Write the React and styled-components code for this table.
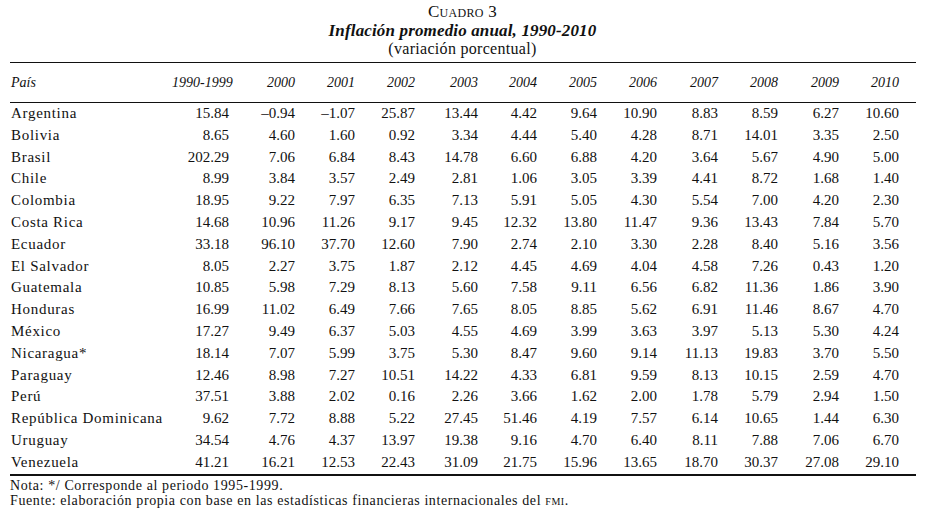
import React from "react";
import styled, { createGlobalStyle } from "styled-components";

const GlobalStyle = createGlobalStyle`
  html, body {
    margin: 0;
    padding: 0;
    background: #ffffff;
  }
  body {
    font-family: "Liberation Serif", "Times New Roman", serif;
    color: #111111;
  }
`;

const years = ["1990-1999", "2000", "2001", "2002", "2003", "2004", "2005", "2006", "2007", "2008", "2009", "2010"];
const colWidths = [74, 66, 60, 60, 63, 59, 60, 60, 61, 60, 61, 60];

const rows = [
  ["Argentina", "15.84", "–0.94", "–1.07", "25.87", "13.44", "4.42", "9.64", "10.90", "8.83", "8.59", "6.27", "10.60"],
  ["Bolivia", "8.65", "4.60", "1.60", "0.92", "3.34", "4.44", "5.40", "4.28", "8.71", "14.01", "3.35", "2.50"],
  ["Brasil", "202.29", "7.06", "6.84", "8.43", "14.78", "6.60", "6.88", "4.20", "3.64", "5.67", "4.90", "5.00"],
  ["Chile", "8.99", "3.84", "3.57", "2.49", "2.81", "1.06", "3.05", "3.39", "4.41", "8.72", "1.68", "1.40"],
  ["Colombia", "18.95", "9.22", "7.97", "6.35", "7.13", "5.91", "5.05", "4.30", "5.54", "7.00", "4.20", "2.30"],
  ["Costa Rica", "14.68", "10.96", "11.26", "9.17", "9.45", "12.32", "13.80", "11.47", "9.36", "13.43", "7.84", "5.70"],
  ["Ecuador", "33.18", "96.10", "37.70", "12.60", "7.90", "2.74", "2.10", "3.30", "2.28", "8.40", "5.16", "3.56"],
  ["El Salvador", "8.05", "2.27", "3.75", "1.87", "2.12", "4.45", "4.69", "4.04", "4.58", "7.26", "0.43", "1.20"],
  ["Guatemala", "10.85", "5.98", "7.29", "8.13", "5.60", "7.58", "9.11", "6.56", "6.82", "11.36", "1.86", "3.90"],
  ["Honduras", "16.99", "11.02", "6.49", "7.66", "7.65", "8.05", "8.85", "5.62", "6.91", "11.46", "8.67", "4.70"],
  ["México", "17.27", "9.49", "6.37", "5.03", "4.55", "4.69", "3.99", "3.63", "3.97", "5.13", "5.30", "4.24"],
  ["Nicaragua*", "18.14", "7.07", "5.99", "3.75", "5.30", "8.47", "9.60", "9.14", "11.13", "19.83", "3.70", "5.50"],
  ["Paraguay", "12.46", "8.98", "7.27", "10.51", "14.22", "4.33", "6.81", "9.59", "8.13", "10.15", "2.59", "4.70"],
  ["Perú", "37.51", "3.88", "2.02", "0.16", "2.26", "3.66", "1.62", "2.00", "1.78", "5.79", "2.94", "1.50"],
  ["República Dominicana", "9.62", "7.72", "8.88", "5.22", "27.45", "51.46", "4.19", "7.57", "6.14", "10.65", "1.44", "6.30"],
  ["Uruguay", "34.54", "4.76", "4.37", "13.97", "19.38", "9.16", "4.70", "6.40", "8.11", "7.88", "7.06", "6.70"],
  ["Venezuela", "41.21", "16.21", "12.53", "22.43", "31.09", "21.75", "15.96", "13.65", "18.70", "30.37", "27.08", "29.10"],
];

const Page = styled.div`
  width: 925px;
  height: 512px;
  padding-top: 2px;
  box-sizing: border-box;
`;

const TitleBlock = styled.header`
  display: flex;
  flex-direction: column;
  align-items: center;
  text-align: center;
`;

const Label = styled.div`
  font-size: 17px;
  line-height: 19px;
  font-variant: small-caps;
  letter-spacing: 0.3px;
`;

const Title = styled.div`
  font-size: 17px;
  line-height: 19px;
  font-style: italic;
  font-weight: bold;
  letter-spacing: 0.15px;
`;

const Subtitle = styled.div`
  font-size: 16px;
  line-height: 18px;
  letter-spacing: 0.3px;
`;

const Table = styled.table`
  margin: 4px 0 0 10px;
  width: 906px;
  border-collapse: collapse;
  table-layout: fixed;
  border-top: 1px solid #111;
  border-bottom: 2px solid #111;
`;

const HeadRow = styled.tr`
  border-bottom: 1px solid #111;
`;

const HeadCell = styled.th`
  height: 39px;
  padding: 0 ${(p) => (p.$first ? "0 0 1px" : "17px 0 0")};
  font-size: 14px;
  font-style: italic;
  font-weight: normal;
  text-align: ${(p) => (p.$first ? "left" : "right")};
  white-space: nowrap;
`;

const Row = styled.tr`
  height: 21.8px;
`;

const NameCell = styled.td`
  padding: 0 0 0 1px;
  font-size: 15px;
  line-height: 21.8px;
  letter-spacing: 0.7px;
  white-space: nowrap;
`;

const Cell = styled.td`
  padding: 0 17px 0 0;
  font-size: 15px;
  line-height: 21.8px;
  text-align: right;
  white-space: nowrap;
`;

const Notes = styled.div`
  margin: 2px 0 0 10px;
  font-size: 14px;
  line-height: 15px;
  letter-spacing: 0.6px;
`;

const Caps = styled.span`
  font-variant: small-caps;
`;

export default function App() {
  return (
    <Page>
      <GlobalStyle />
      <TitleBlock>
        <Label>Cuadro 3</Label>
        <Title>Inflación promedio anual, 1990-2010</Title>
        <Subtitle>(variación porcentual)</Subtitle>
      </TitleBlock>
      <Table>
        <colgroup>
          <col style={{ width: 162 }} />
          {colWidths.map((w, i) => (
            <col key={i} style={{ width: w }} />
          ))}
        </colgroup>
        <thead>
          <HeadRow>
            <HeadCell $first>País</HeadCell>
            {years.map((y) => (
              <HeadCell key={y}>{y}</HeadCell>
            ))}
          </HeadRow>
        </thead>
        <tbody>
          {rows.map(([name, ...values]) => (
            <Row key={name}>
              <NameCell>{name}</NameCell>
              {values.map((v, i) => (
                <Cell key={i}>{v}</Cell>
              ))}
            </Row>
          ))}
        </tbody>
      </Table>
      <Notes>
        <div>Nota: */ Corresponde al periodo 1995-1999.</div>
        <div>
          Fuente: elaboración propia con base en las estadísticas financieras internacionales del <Caps>fmi</Caps>.
        </div>
      </Notes>
    </Page>
  );
}
